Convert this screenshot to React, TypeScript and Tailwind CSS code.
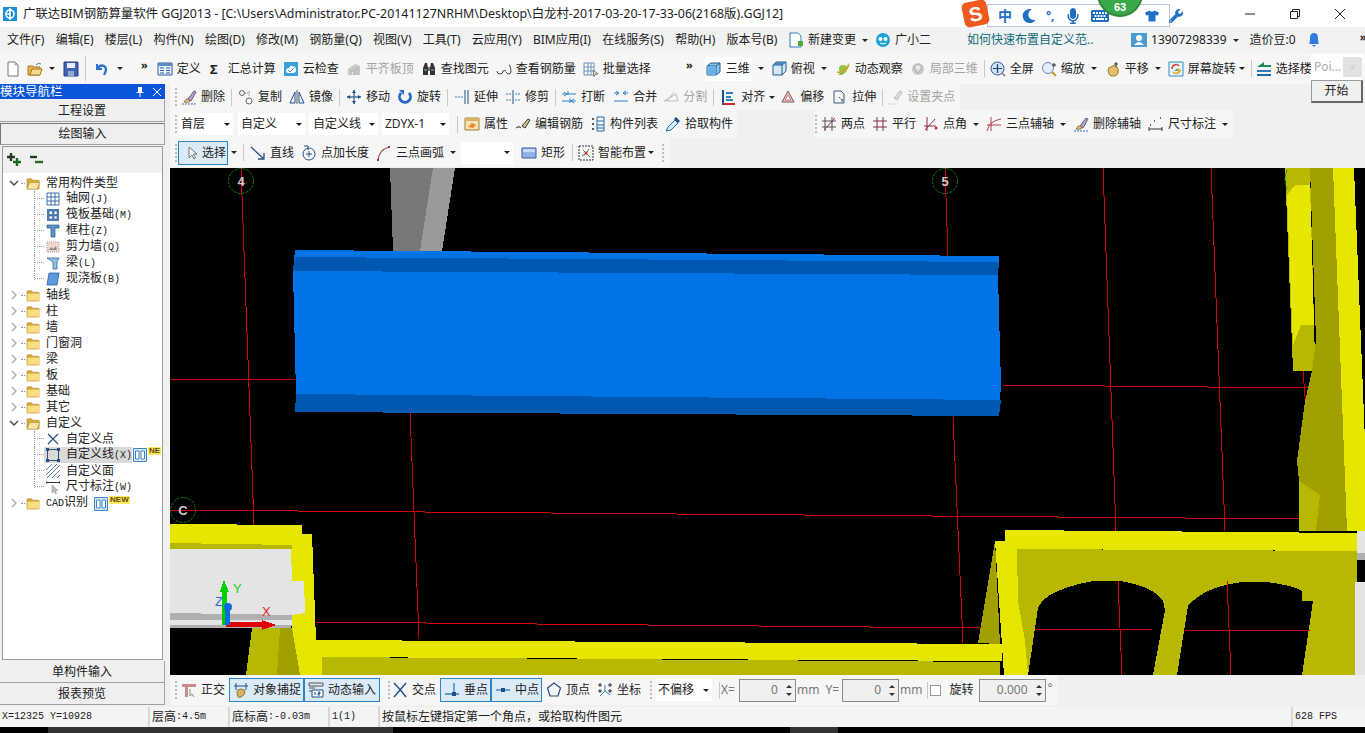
import type { ReactNode } from "react"
import { FaKeyboard, FaMicrophone, FaMoon, FaTshirt, FaWrench } from "react-icons/fa"

// small 16px icon wrapper, everything in the toolbars goes through this
function Ic({ children, className = "" }: { children: ReactNode; className?: string }) {
  return (
    <svg viewBox="0 0 16 16" className={`w-4 h-4 shrink-0 ${className}`} fill="none">
      {children}
    </svg>
  )
}

const icons = {
  doc: <Ic><path d="M3 1h7l3 3v11H3z" fill="#fff" stroke="#777" /><path d="M10 1v3h3" stroke="#999" /></Ic>,
  open: <Ic><path d="M1 5h5l1 1h6v8H1z" fill="#e9b44c" stroke="#a87a20" /><path d="M3 14l2-6h10l-2 6z" fill="#f6d88b" stroke="#a87a20" /><path d="M9 4q2-3 5-1" stroke="#3a7bd5" /></Ic>,
  save: <Ic><path d="M1 1h14v14H1z" fill="#3f63b5" stroke="#23408a" /><path d="M4 2h8v5H4z" fill="#e8eefc" /><path d="M5 10h6v5H5z" fill="#9aa7c7" /></Ic>,
  undo: <Ic><path d="M4 3v5h5" stroke="#2f6fd0" strokeWidth="2" /><path d="M4 8q3-5 7-3t0 9" stroke="#2f6fd0" strokeWidth="2.4" /></Ic>,
  define: <Ic><path d="M1 2h14v12H1z" fill="#eaf2fb" stroke="#2d5f9a" /><path d="M1 2h14v3H1z" fill="#5a8cc7" /><path d="M3 7h4M3 9.500h4M3 12h4M9 7h4M9 9.500h4M9 12h4" stroke="#2d5f9a" /></Ic>,
  cloud: <Ic><path d="M1 1h14v14H1z" fill="#3aa0dc" /><path d="M3 10q0-3 3-3 1-3 4-2t3 4q0 3-3 3H5q-2 0-2-2z" fill="#fff" /><path d="M5 9l2 2 4-4" stroke="#3aa0dc" /></Ic>,
  flat: <Ic><path d="M2 14V8l7-5 5 2v9z" fill="#c9c9c9" /><path d="M5 14v-4h3v4M10 14V7h2v7" fill="#e5e5e5" stroke="#aaa" /></Ic>,
  bino: <Ic><path d="M2 7l2-5h2l1 5v7H2zM9 7l1-5h2l2 5v7H9z" fill="#333" /><path d="M7 6h2v4H7z" fill="#777" /><path d="M3 9h3M10 9h3" stroke="#8fb3e0" /></Ic>,
  glasses: <Ic><path d="M1 10q0 3 3 3t3-3M10 11q1 2 3 2t2-3q-1-7-2-6" stroke="#444" /><path d="M7 10q1-1 3 0" stroke="#444" /></Ic>,
  batch: <Ic><path d="M1 2h10v12H1z" fill="#fff" stroke="#6f8fb5" /><path d="M1 6h10M1 10h10M5 2v12M8 2v12" stroke="#6f8fb5" /><path d="M10 9l5 4-3 .5-1 2z" fill="#ddd" stroke="#777" /></Ic>,
  cube: <Ic><path d="M1 5l4-3h9v9l-4 3H1z" fill="#8ec5ea" stroke="#1e5c8a" /><path d="M1 5h9v9M10 5l4-3" stroke="#1e5c8a" /><path d="M1 5h9v9H1z" fill="#6cafe0" /></Ic>,
  topview: <Ic><path d="M2 4l3-3h10v9l-4 4H2z" fill="#d5e8f6" stroke="#1e5c8a" /><path d="M2 4h9v10M11 4l4-3" stroke="#1e5c8a" /><path d="M5 1h10l-4 3H2z" fill="#4d88b8" /></Ic>,
  orbit: <Ic><path d="M3 13q6-1 9-8l2-3-1 5q-3 7-8 7z" fill="#6cad2e" /><circle cx="8" cy="8" r="4" fill="#8fc640" /><path d="M2 11q6 2 12-7" stroke="#d9a021" strokeWidth="1.500" /></Ic>,
  local3d: <Ic><circle cx="8" cy="8" r="6" fill="#c9c9c9" /><path d="M4 6l4-3 4 3-4 6z" fill="#e8e8e8" stroke="#aaa" /></Ic>,
  fullscreen: <Ic><circle cx="7.500" cy="7.500" r="6.500" fill="#cfe1f5" stroke="#3b5f92" /><path d="M7.500 3v9M3 7.500h9" stroke="#203f70" strokeWidth="1.200" /><path d="M12 12l3 3" stroke="#777" strokeWidth="1.500" /></Ic>,
  zoom: <Ic><circle cx="7" cy="7" r="5.500" fill="#e4edf8" stroke="#6f87a8" /><path d="M11 11l4 4" stroke="#c59a2a" strokeWidth="2" /><path d="M13 2v4M11 4h4" stroke="#333" /></Ic>,
  pan: <Ic><path d="M3 9q0-3 3-3l1-1q3-1 5 1t1 6q-1 3-4 3H6q-3-2-3-6z" fill="#e7bf6a" stroke="#9b7a2c" /><path d="M11 1v5M9 3h4" stroke="#333" /></Ic>,
  rotate: <Ic><path d="M1 1h14v14H1z" fill="#eaf2fb" stroke="#2c8fc6" /><path d="M4 8a4 4 0 0 1 7-3" stroke="#d9442c" strokeWidth="1.500" /><path d="M12 8a4 4 0 0 1-7 3" stroke="#e0a526" strokeWidth="1.500" /><path d="M6 10l4-3 1 3z" fill="#6cad2e" /></Ic>,
  floors: <Ic><path d="M1 6l7-5v3h7v2H1z" fill="#1f8a5a" /><path d="M1 9h14v2H1z" fill="#2d7fc4" /><path d="M1 13h14v2H1z" fill="#1f6aa8" /></Ic>,
  brush: <Ic><path d="M7 10l6-8 2 1-5 9z" fill="#b9a2c9" stroke="#6f5a80" /><path d="M3 13q2-4 4-3l2 2q-2 2-6 1z" fill="#e7c982" stroke="#8d7540" /><path d="M1 15h14" stroke="#3a6fc0" strokeDasharray="2 1" /></Ic>,
  copy: <Ic><circle cx="4" cy="4" r="2.500" stroke="#666" /><circle cx="11" cy="12" r="3" stroke="#666" /><path d="M7 4h5M11 2v5" stroke="#888" strokeDasharray="1 1" /></Ic>,
  mirror: <Ic><path d="M8 1v14" stroke="#555" /><path d="M6 3v11H1zM10 3v11h5z" stroke="#1f4f8a" /></Ic>,
  move: <Ic><path d="M8 1v14M1 8h14" stroke="#4a6f96" strokeWidth="1.400" /><path d="M8 1l-2 3h4zM8 15l-2-3h4zM1 8l3-2v4zM15 8l-3-2v4z" fill="#1f4f8a" /></Ic>,
  turn: <Ic><path d="M4 4a5.500 5.500 0 1 0 8 0" stroke="#2a66c8" strokeWidth="2.800" /><path d="M2 1h5v5z" fill="#2a66c8" /></Ic>,
  extend: <Ic><path d="M1 8h8" stroke="#2d7fc4" strokeDasharray="2 1" /><path d="M11 1v14M14 1v14" stroke="#1f4f8a" /></Ic>,
  trim: <Ic><path d="M1 5h5M1 11h5M10 5h5M10 11h5" stroke="#2d7fc4" strokeDasharray="2 1" /><path d="M8 1v14" stroke="#1f4f8a" /></Ic>,
  breakIc: <Ic><path d="M1 5h14M1 12h14" stroke="#2d7fc4" /><path d="M3 3l3 2-3 2M13 10l-3 2 3 2M7 2v4M9 9v5" stroke="#2d7fc4" /></Ic>,
  merge: <Ic><path d="M1 4h5M10 4h5M1 12h14" stroke="#2d7fc4" /><path d="M3 2l3 2-3 2M13 2l-3 2 3 2" stroke="#2d7fc4" /></Ic>,
  split: <Ic><path d="M1 12h14L13 5zM4 12l7-9" stroke="#bbb" /></Ic>,
  align: <Ic><path d="M2 1v14h12" stroke="#1f4f8a" strokeWidth="2" /><path d="M2 15h12" stroke="#c62d2d" strokeWidth="2" /><path d="M5 4h7M5 8h5M5 11h7" stroke="#2d7fc4" strokeWidth="2" /></Ic>,
  offset: <Ic><path d="M8 2l6 11H2z" fill="#f4c2c2" stroke="#7a5a5a" /><path d="M8 6l3 5H5z" fill="#fff" stroke="#c97b7b" /></Ic>,
  stretch: <Ic><path d="M2 2h7l3 3v9H2z" stroke="#3a5a80" /><path d="M7 8l4 4M9 12h2v-2" stroke="#3a5a80" strokeDasharray="2 1" /></Ic>,
  grip: <Ic><path d="M7 9l6-7 2 1-5 8z" fill="#ddd" stroke="#bbb" /><path d="M1 15h10" stroke="#ccc" strokeDasharray="2 1" /></Ic>,
  props: <Ic><path d="M1 2h14v12H1z" fill="#f6e3b4" stroke="#9c7c35" /><path d="M1 2h14v3H1z" fill="#d8b25e" /><path d="M4 11l4-4 4 2-3 3z" fill="#e58a2b" /></Ic>,
  editbar: <Ic><path d="M1 12q3-3 5 0M7 10l6-7 2 1-5 8z" stroke="#333" fill="#d8c089" /></Ic>,
  list: <Ic><path d="M7 1h7v14H7z" stroke="#1f6aa8" /><path d="M7 5h7M7 9h7M7 12h7" stroke="#1f6aa8" /><path d="M2 2h2v2H2zM2 7h2v2H2zM2 12h2v2H2z" fill="#555" /></Ic>,
  pick: <Ic><path d="M1 15l2-4 7-7 3 3-7 7z" fill="#d5ecf7" stroke="#1f6aa8" /><path d="M9 3l2-2 4 4-2 2z" fill="#1f4f8a" /></Ic>,
  twoPt: <Ic><path d="M4 1v14M11 1v14M1 11h14M1 5l14 0" stroke="#555" /><path d="M3 14L14 2" stroke="#8a2d2d" /></Ic>,
  parallel: <Ic><path d="M5 1v14M11 1v14M1 5h14M1 11h14" stroke="#8a2d4a" /></Ic>,
  angle: <Ic><path d="M4 1v14M1 10h12M2 14L12 3" stroke="#8a2d4a" /><circle cx="13" cy="12" r="1.500" fill="#c62d2d" /></Ic>,
  threePt: <Ic><path d="M1 15Q3 5 15 3M5 1v14M1 9h14" stroke="#b0404a" /></Ic>,
  dim: <Ic><path d="M1 11v4M14 11v4M1 13h13" stroke="#333" /><path d="M2 9h1M6 5h1M12 2h1" stroke="#4a7a3a" strokeWidth="2" /></Ic>,
  cursor: <Ic><path d="M5 2v11l3-3 2 4 1.500-1-2-4h3.500z" fill="#f4f8fc" stroke="#777" /></Ic>,
  line: <Ic><path d="M1 2l13 12M14 8v6H8" stroke="#2a4f80" strokeWidth="1.300" /></Ic>,
  ptLen: <Ic><circle cx="8" cy="9" r="6" stroke="#2a4f80" /><path d="M8 6v6M5 9h6" stroke="#2a4f80" /><path d="M3 1h4v4" stroke="#2a4f80" /></Ic>,
  arc: <Ic><path d="M2 15Q3 5 13 2" stroke="#8a5a4a" strokeWidth="1.300" /><path d="M1 14h2v2H1zM12 1h2v2h-2z" fill="#c62d2d" /></Ic>,
  rect: <Ic><path d="M1 3h14v10H1z" fill="#8fb3ea" stroke="#3a5fa0" /><path d="M2 4h12v3H2z" fill="#c9dcf7" /></Ic>,
  smart: <Ic><path d="M1 1h14v14H1z" stroke="#333" strokeDasharray="2 1" /><path d="M5 5l2 2M11 4l-2 3M4 11l3-2M12 12L9 9" stroke="#4a7a3a" /><circle cx="8" cy="8" r="1.500" fill="#c62d2d" /></Ic>,
  ortho: <Ic><path d="M1 2h14v3H1zM4 5h3v10H4z" fill="#c98b8b" /><path d="M9 7v7l2-2 2 3" stroke="#888" /></Ic>,
  snap: <Ic><path d="M3 1v7M13 1v7M1 4h14" stroke="#1f4f8a" /><path d="M4 10q0-3 4-3t4 3-4 5-4-5z" fill="#d8b25e" stroke="#8d7540" /></Ic>,
  dyn: <Ic><path d="M1 1h14v3H1z" stroke="#555" /><path d="M1 6h6M1 9h6" stroke="#555" /><path d="M4 8h11v7H4z" fill="#fff" stroke="#1f4f8a" /><path d="M7 10v3M10 10h2v1.500h-2V13h2" stroke="#1f4f8a" /></Ic>,
  cross: <Ic><path d="M2 1q7 7 12 14M14 1Q8 8 2 15" stroke="#1f4f8a" strokeWidth="1.400" /></Ic>,
  perp: <Ic><path d="M10 1v11M1 12h14" stroke="#2d7fc4" strokeWidth="1.300" /><path d="M8 10h4v4H8z" fill="#1f4f8a" /></Ic>,
  mid: <Ic><path d="M1 8h14" stroke="#2d7fc4" strokeWidth="1.300" /><path d="M6 6h4v4H6z" fill="#1f4f8a" /></Ic>,
  vertex: <Ic><path d="M8 1l6.500 5-2.500 8H4L1.500 6z" stroke="#2a4f80" strokeWidth="1.200" /></Ic>,
  coord: <Ic><path d="M8 3v6l-5 5M8 9l5 4" stroke="#2d7fc4" /><path d="M2 2h2v2H2zM12 2h2v2h-2zM2 8h2v2H2zM12 8h2v2h-2z" stroke="#333" /></Ic>,
  fileNew: <Ic><path d="M2 1h8l3 3v11H2z" fill="#fff" stroke="#2d7fc4" /><path d="M10 9h5v5h-5z" fill="#4fae3a" /></Ic>,
  xiaoer: <Ic><circle cx="8" cy="8" r="7" fill="#1ba3d6" /><circle cx="5.500" cy="7" r="2" fill="#fff" /><circle cx="10.500" cy="7" r="2" fill="#fff" /><path d="M5 11q3 2 6 0" stroke="#fff" /></Ic>,
  user: <Ic><path d="M0 1h16v14H0z" fill="#4a9ad4" /><circle cx="8" cy="6" r="3" fill="#fff" /><path d="M3 13q5-6 10 0z" fill="#fff" /></Ic>,
  bell: <Ic><path d="M3 12q1-1 1-6t4-5 4 5 1 6z" fill="#2f7de0" /><path d="M6 13h4l-2 2z" fill="#2f7de0" /></Ic>,
}

function Caret({ className = "" }: { className?: string }) {
  return <span className={`w-0 h-0 shrink-0 border-x-[3px] border-t-[3px] border-x-transparent border-t-[#222] ${className}`} />
}

function Sep({ className = "" }: { className?: string }) {
  return <span className={`w-px h-[17px] bg-[#c8c8c8] shrink-0 ${className}`} />
}

function Grip({ className = "" }: { className?: string }) {
  return <span className={`h-[18px] border-l-2 border-dotted border-[#bdbdbd] shrink-0 ${className}`} />
}

function Tool({ icon, label, off, className = "" }: { icon: ReactNode; label: string; off?: boolean; className?: string }) {
  return (
    <div className={`flex items-center gap-1 shrink-0 ${off ? "text-[#a3a3a3]" : ""} ${className}`}>
      {icon}
      <span>{label}</span>
    </div>
  )
}

function Chevrons({ className = "" }: { className?: string }) {
  return <span className={`text-[11px] font-bold leading-none shrink-0 ${className}`}>»</span>
}

function Drop({ label, className = "" }: { label: string; className?: string }) {
  return (
    <div className={`h-[22px] bg-white flex items-center justify-between pr-[3px] shrink-0 ${className}`}>
      <span>{label}</span>
      <Caret />
    </div>
  )
}

function Active({ children, className = "" }: { children: ReactNode; className?: string }) {
  return <div className={`h-[24px] flex items-center gap-1 border border-[#2a84c6] bg-[#dbeaf7] shrink-0 ${className}`}>{children}</div>
}

function Spin({ value, className = "" }: { value: string; className?: string }) {
  return (
    <div className={`h-[23px] border border-[#8a8a8a] bg-[#f0f0f0] text-[#777] flex items-center justify-end shrink-0 ${className}`}>
      <span className="mr-[8px]">{value}</span>
      <div className="flex flex-col gap-[5px] mr-[3px]">
        <span className="w-0 h-0 border-x-[3px] border-b-[3px] border-x-transparent border-b-[#333]" />
        <span className="w-0 h-0 border-x-[3px] border-t-[3px] border-x-transparent border-t-[#333]" />
      </div>
    </div>
  )
}

function Folder({ open }: { open?: boolean }) {
  return (
    <svg viewBox="0 0 16 14" className="w-[15px] h-[13px] shrink-0">
      <path d="M1 2h5l1 1.500h7V13H1z" fill="#d9a93a" stroke="#b08628" strokeWidth=".6" />
      {open ? <path d="M1 13l3-7h11l-3 7z" fill="#fbe6a8" stroke="#b08628" strokeWidth=".6" /> : <path d="M1.500 5h13v7.500h-13z" fill="#fbdc85" />}
    </svg>
  )
}

function TreeGroup({ label, open, mono }: { label: string; open?: boolean; mono?: string }) {
  return (
    <div className="h-4 flex items-center shrink-0">
      <svg viewBox="0 0 10 10" className="w-[10px] h-[10px] ml-[6px] mr-[2px] shrink-0">
        {open ? <path d="M1 3l4 4 4-4" fill="none" stroke="#444" strokeWidth="1.400" /> : <path d="M3 1l4 4-4 4" fill="none" stroke="#aaa" strokeWidth="1.400" />}
      </svg>
      <span className="w-[4px] border-b border-dotted border-[#999] mr-[1px]" />
      <Folder open={open} />
      <span className="ml-[5px] whitespace-nowrap">
        {mono ? <span className="font-['Liberation_Mono',monospace] text-[10px]">{mono}</span> : null}
        {label}
      </span>
    </div>
  )
}

function TreeLeaf({ icon, label, suffix, last, selected, children }: { icon: ReactNode; label: string; suffix?: string; last?: boolean; selected?: boolean; children?: ReactNode }) {
  return (
    <div className="h-4 flex items-start pl-[31px] shrink-0">
      <div className={`w-[10px] border-l border-dotted border-[#999] shrink-0 ${last ? "h-[9px]" : "h-4"}`}>
        <div className="h-[8px] border-b border-dotted border-[#999]" />
      </div>
      <div className={`flex items-center h-4 pl-[2px] ${selected ? "bg-[#d9d9d9]" : ""}`}>
        <span className="w-[14px] h-4 flex items-center shrink-0 mr-[6px]">{icon}</span>
        <span className="whitespace-nowrap">
          {label}
          {suffix ? <span className="font-['Liberation_Mono',monospace] text-[10px]">{suffix}</span> : null}
        </span>
      </div>
      {children}
    </div>
  )
}

function BookNew({ text = "NEW", className = "" }: { text?: string; className?: string }) {
  return (
    <div className={`flex items-start shrink-0 ${className}`}>
      <svg viewBox="0 0 14 14" className="w-[14px] h-[14px] mt-[1px] shrink-0">
        <path d="M.5.500h13v13H.5z" fill="#dcebf8" stroke="#3a83c4" />
        <path d="M2.500 3h3.500v8H2.500zM8 3h3.500v8H8z" fill="#fff" stroke="#3a83c4" />
      </svg>
      <span className="ml-[1px] bg-[#ffe95c] text-[#5b4a00] text-[8px] leading-[8px] font-bold px-[1px] font-['Liberation_Sans',sans-serif]">{text}</span>
    </div>
  )
}

function SideButton({ label, sunken }: { label: string; sunken?: boolean }) {
  return (
    <div className={`h-[22px] flex items-center justify-center bg-[#efefef] shrink-0 border-b border-r border-[#a0a0a0] ${sunken ? "border-t border-l border-t-[#777] border-l-[#777]" : ""}`}>
      {label}
    </div>
  )
}

function LeftPanel() {
  return (
    <aside className="w-[165px] flex flex-col shrink-0">
      <div className="h-[15px] bg-[#0a55d9] text-white flex items-center shrink-0">
        <span className="text-[12.5px] leading-[15px]">模块导航栏</span>
        <svg viewBox="0 0 12 12" className="w-3 h-3 ml-[71px]"><path d="M4 1h4v5h1.500v1h-3v4h-1V7h-3V6H4z" fill="#fff" /></svg>
        <svg viewBox="0 0 12 12" className="w-3 h-3 ml-[5px]"><path d="M2 2l8 8M10 2l-8 8" stroke="#fff" /></svg>
      </div>
      <div className="h-px shrink-0" />
      <SideButton label="工程设置" />
      <div className="h-px shrink-0" />
      <SideButton label="绘图输入" sunken />
      <div className="mx-[2px] flex-1 min-h-0 mt-[1px] border border-[#9a9a9a] bg-[#f0f0f0] flex flex-col overflow-hidden">
        <div className="h-[26px] flex items-center pl-[3px] shrink-0">
          <svg viewBox="0 0 40 16" className="w-10 h-4">
            <path d="M5 1v8M1 5h8" stroke="#1f3d1f" strokeWidth="2.400" />
            <path d="M11 6v8M7 10h8" stroke="#1f6a1f" strokeWidth="2.400" />
            <path d="M24 5h7" stroke="#1f3d1f" strokeWidth="2.400" />
            <path d="M29 10h8" stroke="#1f6a1f" strokeWidth="2.400" />
          </svg>
        </div>
        <div className="flex-1 bg-white flex flex-col pt-[2px] overflow-hidden leading-4">
          <TreeGroup label="常用构件类型" open />
          <TreeLeaf label="轴网" suffix="(J)" icon={<svg viewBox="0 0 14 14" className="w-[14px] h-[14px]"><path d="M1 1h12v12H1zM1 5h12M1 9h12M5 1v12M9 1v12" fill="none" stroke="#3b6fb0" /></svg>} />
          <TreeLeaf label="筏板基础" suffix="(M)" icon={<svg viewBox="0 0 14 14" className="w-[14px] h-[14px]"><path d="M1 1h12v12H1z" fill="#4d7fb8" /><path d="M3 3h3.500v3.500H3zM8 3h3v3.500H8zM3 8h3.500v3H3zM8 8h3v3H8z" fill="#fff" stroke="#22487a" strokeWidth=".5" /></svg>} />
          <TreeLeaf label="框柱" suffix="(Z)" icon={<svg viewBox="0 0 14 14" className="w-[14px] h-[14px]"><path d="M1 1h12v3H9v9H5V4H1z" fill="#5b90c9" stroke="#2c5a8a" strokeWidth=".7" /></svg>} />
          <TreeLeaf label="剪力墙" suffix="(Q)" icon={<svg viewBox="0 0 14 14" className="w-[14px] h-[14px]"><path d="M1 2h12v10H1z" fill="#f0d8cf" stroke="#b89" strokeDasharray="1 1" /><path d="M3 10l2-3 2 2 3-3 1 4z" fill="#888" /></svg>} />
          <TreeLeaf label="梁" suffix="(L)" icon={<svg viewBox="0 0 14 14" className="w-[14px] h-[14px]"><path d="M1 2h12l-2 4v7H7V6z" fill="#8fc0e6" stroke="#2c5a8a" strokeWidth=".7" /></svg>} />
          <TreeLeaf last label="现浇板" suffix="(B)" icon={<svg viewBox="0 0 14 14" className="w-[14px] h-[14px]"><path d="M3 1h10l-2 12H1z" fill="#5d9be0" stroke="#1f4f8a" strokeWidth=".7" /></svg>} />
          <TreeGroup label="轴线" />
          <TreeGroup label="柱" />
          <TreeGroup label="墙" />
          <TreeGroup label="门窗洞" />
          <TreeGroup label="梁" />
          <TreeGroup label="板" />
          <TreeGroup label="基础" />
          <TreeGroup label="其它" />
          <TreeGroup label="自定义" open />
          <TreeLeaf label="自定义点" icon={<svg viewBox="0 0 14 14" className="w-[14px] h-[14px]"><path d="M2 2l10 10M12 2L2 12" stroke="#2a4f80" strokeWidth="1.200" /></svg>} />
          <TreeLeaf selected label="自定义线" suffix="(X)" icon={<svg viewBox="0 0 14 14" className="w-[14px] h-[14px]"><path d="M1.500 1.500h11v11h-11z" fill="none" stroke="#2a4f80" /><path d="M0 0h3v3H0zM11 0h3v3h-3zM0 11h3v3H0zM11 11h3v3h-3z" fill="#2a4f80" /></svg>}>
            <BookNew text="NE" className="ml-px" />
          </TreeLeaf>
          <TreeLeaf label="自定义面" icon={<svg viewBox="0 0 14 14" className="w-[14px] h-[14px]"><path d="M0 6l6-6M0 11L11 0M1 14L14 1M6 14l8-8M11 14l3-3" stroke="#5a7fa8" /></svg>} />
          <TreeLeaf last label="尺寸标注" suffix="(W)" icon={<svg viewBox="0 0 14 14" className="w-[14px] h-[14px]"><path d="M0 1v3M14 1v3M0 2.500h14" stroke="#333" /><path d="M6 5v8l2-2 1.500 3 1-.5L9 10.500h3z" fill="#bbb" stroke="#888" strokeWidth=".5" /></svg>} />
          <div className="h-4 flex items-center shrink-0">
            <TreeGroup label="识别" mono="CAD" />
            <BookNew className="ml-[6px]" />
          </div>
        </div>
      </div>
      <div className="h-px shrink-0" />
      <SideButton label="单构件输入" />
      <SideButton label="报表预览" />
      <div className="h-[2px] shrink-0" />
    </aside>
  )
}

function Canvas() {
  return (
    <div className="h-[507px] mt-px bg-black shrink-0 overflow-hidden">
      <svg viewBox="170 168 1195 507" className="block w-[1195px] h-[507px]" shapeRendering="crispEdges">
        {/* grid lines */}
        <g stroke="#d40000" strokeWidth="1" fill="none">
          <path d="M241 168L254 525" />
          <path d="M945 168L948 256" />
          <path d="M410 412L419 638" />
          <path d="M953 417L963 643" />
          <path d="M1103 168L1116 531" />
          <path d="M1211 168L1225 531" />
          <path d="M170 379H295" />
          <path d="M1001 385L1310 388" />
          <path d="M170 510L1310 519" />
          <path d="M316 622L980 628" />
          <path d="M1303 371L1306 408" />
        </g>

        {/* column behind the beam */}
        <polygon points="390,168 433,168 420,251 393,251" fill="#787878" />
        <polygon points="433,168 455,168 442,251 420,251" fill="#9a9a9a" />

        {/* selected beam */}
        <polygon points="295,250 999,256 998,275 1001,385 1000,400 296,394 293,271" fill="#0073e5" />
        <polygon points="295,257 999,262 998,275 293,271" fill="#0058b0" />
        <polygon points="296,394 1001,400 999,416 295,412" fill="#0058b0" />

        {/* bottom-left wall */}
        <polygon points="246,675 252,628 292,628 300,675" fill="#b8b800" />
        <polygon points="277,675 280,628 292,628 300,675" fill="#a0a000" />
        <polygon points="170,524 302,525 302,534 312,534 316,640 1002,644 1002,661 322,657 322,675 300,675 292,628 291,549 170,549" fill="#e6e600" />
        <polygon points="170,543 292,545 292,549 170,549" fill="#b8b800" />
        <polygon points="170,549 291,549 292,581 304,581 305,613 292,615 170,613" fill="#e4e4e4" />
        <polygon points="170,613 292,615 292,620 170,620" fill="#b0b0b0" />
        <polygon points="170,620 292,620 292,625 170,625" fill="#e4e4e4" />
        <polygon points="170,625 292,625 291,628 170,628" fill="#b0b0b0" />
        <polygon points="322,657 1000,662 1000,675 322,675" fill="#b8b800" />

        {/* right wall with the arches */}
        <polygon points="978,643 995,541 1000,644" fill="#a0a000" />
        <polygon points="1017,549 1357,551 1355,675 1017,675" fill="#b8b800" />
        <path d="M1028 675L1038 608Q1045 590 1093 581H1120Q1155 587 1163 601L1165 610L1153 675Z" fill="#000" />
        <path d="M1177 675L1188 606Q1205 586 1243 582H1267Q1295 586 1302 591V601H1313L1302 675Z" fill="#000" />
        <g stroke="#d40000" strokeWidth="1" fill="none">
          <path d="M1118 581L1122 675" />
          <path d="M1227 581L1231 675" />
          <path d="M1035 629L1152 630" />
          <path d="M1185 630L1310 631" />
        </g>
        <polygon points="1005,530 1357,533 1358,551 1017,549 1018,601 1025,641 1028,675 1004,675 995,541 1005,541" fill="#e6e600" />

        {/* top right column */}
        <polygon points="1285,168 1310,168 1315,361 1313,371 1293,371" fill="#b8b800" />
        <polygon points="1287,195 1295,185 1301,325 1293,345" fill="#e6e600" />
        <polygon points="1295,185 1310,185 1314,325 1301,325" fill="#e6e600" />
        <polygon points="1310,168 1333,168 1347,531 1299,531 1299,481 1297,461 1305,401 1312,371 1316,340" fill="#a0a000" />
        <polygon points="1299,481 1320,495 1316,531 1299,531" fill="#b8b800" />
        <polygon points="1333,168 1354,168 1365,441 1365,531 1347,531" fill="#e6e600" />

        {/* piece on the right edge */}
        <rect x="1357" y="531" width="8" height="22" fill="#e4e4e4" />
        <rect x="1357" y="553" width="8" height="7" fill="#b0b0b0" />
        <rect x="1355" y="582" width="10" height="93" fill="#e4e4e4" />

        {/* axis bubbles */}
        <g fill="none" stroke="#127812" strokeDasharray="3 1" shapeRendering="auto">
          <circle cx="241" cy="181" r="12.500" />
          <circle cx="945" cy="181" r="12.500" />
          <circle cx="183" cy="510" r="12.500" />
          <path d="M1287 170Q1283 180 1287 190" />
        </g>
        <g fill="#ccc" fontSize="13" fontWeight="700" textAnchor="middle" fontFamily="Liberation Sans, sans-serif" shapeRendering="auto">
          <text x="241" y="186">4</text>
          <text x="945" y="186">5</text>
          <text x="183" y="515">C</text>
        </g>

        {/* ucs axes */}
        <rect x="222" y="590" width="5" height="35" fill="#00d000" />
        <polygon points="224,580 220,592 229,592" fill="#00d000" />
        <rect x="226" y="622" width="38" height="5" fill="#e00000" />
        <polygon points="262,620 276,625 262,630" fill="#e00000" />
        <rect x="225" y="606" width="5" height="19" fill="#0a6ae0" />
        <circle cx="228" cy="607" r="4" fill="#0a6ae0" shapeRendering="auto" />
        <g fontSize="13" fontFamily="Liberation Sans, sans-serif" shapeRendering="auto">
          <text x="233" y="593" fill="#22cc22">Y</text>
          <text x="215" y="606" fill="#2a6ae0">Z</text>
          <text x="262" y="616" fill="#dd2222">X</text>
        </g>
      </svg>
    </div>
  )
}

function TitleBar() {
  return (
    <div className="h-[27px] bg-white flex items-center shrink-0">
      <svg viewBox="0 0 16 16" className="w-4 h-4 ml-[2px] shrink-0">
        <path d="M1 1h14v14H1z" fill="#1d8fd8" />
        <circle cx="8" cy="8" r="4" fill="none" stroke="#fff" strokeWidth="1.600" />
        <path d="M8 2v12M3 8h5" stroke="#fff" strokeWidth="1.600" />
      </svg>
      <span className="ml-[5px] text-[12.4px] whitespace-nowrap">广联达BIM钢筋算量软件 GGJ2013 - [C:\Users\Administrator.PC-20141127NRHM\Desktop\白龙村-2017-03-20-17-33-06(2168版).GGJ12]</span>
      <svg viewBox="0 0 10 10" className="w-[10px] h-[10px] ml-auto shrink-0"><path d="M0 5h10" stroke="#222" /></svg>
      <svg viewBox="0 0 10 10" className="w-[10px] h-[10px] ml-[35px] shrink-0"><path d="M.5 2.500h7v7h-7zM2.500 2.500v-2h7v7h-2" fill="none" stroke="#222" /></svg>
      <svg viewBox="0 0 10 10" className="w-[10px] h-[10px] ml-[35px] mr-5 shrink-0"><path d="M0 0l10 10M10 0L0 10" stroke="#222" /></svg>
    </div>
  )
}

function MenuBar() {
  const items = ["文件(F)", "编辑(E)", "楼层(L)", "构件(N)", "绘图(D)", "修改(M)", "钢筋量(Q)", "视图(V)", "工具(T)", "云应用(Y)", "BIM应用(I)", "在线服务(S)", "帮助(H)", "版本号(B)"]
  return (
    <div className="h-[26px] bg-[#f2f2f2] flex items-center pl-[7px] shrink-0 whitespace-nowrap overflow-hidden">
      <div className="flex gap-[11.2px] w-[781px] shrink-0">
        {items.map((m) => (
          <span key={m}>{m}</span>
        ))}
      </div>
      <Tool icon={icons.fileNew} label="新建变更" />
      <Caret className="ml-[6px]" />
      <Tool icon={icons.xiaoer} label="广小二" className="ml-[7px]" />
      <span className="ml-[36px] text-[#0f6a7a] w-[127px] shrink-0">如何快速布置自定义范..</span>
      <Tool icon={icons.user} label="13907298339" className="ml-[37px]" />
      <Caret className="ml-[6px]" />
      <span className="ml-[11px] shrink-0">造价豆:0</span>
      <span className="ml-[10px] shrink-0">{icons.bell}</span>
      <Chevrons className="ml-[38px] -mt-2" />
    </div>
  )
}

function MainToolbar() {
  return (
    <div className="h-[31px] bg-[#f6f6f6] flex items-center pl-[5px] shrink-0 whitespace-nowrap">
      {icons.doc}
      <span className="ml-[6px]">{icons.open}</span>
      <Caret className="ml-[6px]" />
      <span className="ml-[8px]">{icons.save}</span>
      <Sep className="ml-[6px] h-[25px]" />
      <span className="ml-[7px]">{icons.undo}</span>
      <Caret className="ml-[8px]" />
      <Chevrons className="ml-[18px] -mt-2" />
      <div className="flex items-center gap-[7px] ml-[9px]">
        <Tool icon={icons.define} label="定义" />
        <Tool icon={<Ic><text x="2" y="13" fontSize="13" fontWeight="700" fill="#222">Σ</text></Ic>} label="汇总计算" />
        <Tool icon={icons.cloud} label="云检查" />
        <Tool icon={icons.flat} label="平齐板顶" off />
        <Tool icon={icons.bino} label="查找图元" />
        <Tool icon={icons.glasses} label="查看钢筋量" />
        <Tool icon={icons.batch} label="批量选择" />
      </div>
      <Chevrons className="ml-[35px] -mt-2" />
      <div className="flex items-center ml-[12px] h-[24px] bg-white pl-px pr-[2px]">
        <Tool icon={icons.cube} label="三维" />
      </div>
      <Caret className="ml-[6px]" />
      <Tool icon={icons.topview} label="俯视" className="ml-[7px]" />
      <Caret className="ml-[6px]" />
      <div className="flex items-center gap-[7px] ml-[8px]">
        <Tool icon={icons.orbit} label="动态观察" />
        <Tool icon={icons.local3d} label="局部三维" off />
      </div>
      <Sep className="ml-[6px]" />
      <Tool icon={icons.fullscreen} label="全屏" className="ml-[5px]" />
      <Tool icon={icons.zoom} label="缩放" className="ml-[7px]" />
      <Caret className="ml-[6px]" />
      <Tool icon={icons.pan} label="平移" className="ml-[8px]" />
      <Caret className="ml-[6px]" />
      <Tool icon={icons.rotate} label="屏幕旋转" className="ml-[7px]" />
      <Caret className="ml-[3px]" />
      <Sep className="ml-[6px]" />
      <Tool icon={icons.floors} label="选择楼" className="ml-[4px]" />
    </div>
  )
}

function EditRow() {
  return (
    <div className="h-[26px] flex items-center shrink-0 whitespace-nowrap">
      <div className="h-full w-[790px] bg-[#f6f6f6] flex items-center pl-[5px] gap-[6px]">
        <Grip />
        <Tool icon={icons.brush} label="删除" className="-ml-[2px]" />
        <Sep />
        <Tool icon={icons.copy} label="复制" />
        <Tool icon={icons.mirror} label="镜像" className="ml-[1px]" />
        <Sep />
        <Tool icon={icons.move} label="移动" />
        <Tool icon={icons.turn} label="旋转" className="ml-[1px]" />
        <Sep />
        <Tool icon={icons.extend} label="延伸" />
        <Tool icon={icons.trim} label="修剪" className="ml-[1px]" />
        <Sep />
        <Tool icon={icons.breakIc} label="打断" className="-ml-[1px]" />
        <Tool icon={icons.merge} label="合并" className="ml-[2px]" />
        <Tool icon={icons.split} label="分割" off />
        <Sep />
        <Tool icon={icons.align} label="对齐" className="ml-[1px]" />
        <Caret className="-ml-[2px]" />
        <Tool icon={icons.offset} label="偏移" className="-ml-[1px]" />
        <Tool icon={icons.stretch} label="拉伸" className="ml-[2px]" />
        <Sep />
        <Tool icon={icons.grip} label="设置夹点" off className="-ml-[2px]" />
      </div>
    </div>
  )
}

function PropertyRow() {
  return (
    <div className="h-[28px] flex items-center shrink-0 whitespace-nowrap">
      <div className="h-full w-[567px] bg-[#f6f6f6] flex items-center pl-[5px]">
        <Grip />
        <Drop label="首层" className="w-[54px] ml-[2px] pl-[2px]" />
        <Drop label="自定义" className="w-[67px] ml-[5px] pl-[3px]" />
        <Drop label="自定义线" className="w-[69px] ml-[4px] pl-[4px]" />
        <Drop label="ZDYX-1" className="w-[67px] ml-[4px] pl-[3px]" />
        <Sep className="ml-[8px]" />
        <Tool icon={icons.props} label="属性" className="ml-[6px]" />
        <Tool icon={icons.editbar} label="编辑钢筋" className="ml-[7px]" />
        <Tool icon={icons.list} label="构件列表" className="ml-[7px]" />
        <Tool icon={icons.pick} label="拾取构件" className="ml-[7px]" />
      </div>
      <div className="h-full w-[419px] ml-[77px] bg-[#f6f6f6] flex items-center pl-[1px]">
        <Grip />
        <Tool icon={icons.twoPt} label="两点" className="ml-[4px]" />
        <Tool icon={icons.parallel} label="平行" className="ml-[7px]" />
        <Tool icon={icons.angle} label="点角" className="ml-[7px]" />
        <Caret className="ml-[6px]" />
        <Tool icon={icons.threePt} label="三点辅轴" className="ml-[7px]" />
        <Caret className="ml-[6px]" />
        <Tool icon={icons.brush} label="删除辅轴" className="ml-[7px]" />
        <Tool icon={icons.dim} label="尺寸标注" className="ml-[7px]" />
        <Caret className="ml-[6px]" />
      </div>
    </div>
  )
}

function DrawRow() {
  return (
    <div className="h-[29px] flex items-center shrink-0 whitespace-nowrap">
      <div className="h-full w-[500px] bg-[#f6f6f6] flex items-center pl-[5px]">
        <Grip />
        <Active className="ml-[1px] w-[50px] pl-[5px]">
          {icons.cursor}
          <span className="-ml-[2px]">选择</span>
        </Active>
        <Caret className="ml-[3px]" />
        <Sep className="ml-[6px]" />
        <Tool icon={icons.line} label="直线" className="ml-[6px]" />
        <Tool icon={icons.ptLen} label="点加长度" className="ml-[7px]" />
        <Tool icon={icons.arc} label="三点画弧" className="ml-[7px]" />
        <Caret className="ml-[6px]" />
        <Drop label="" className="w-[52px] ml-[5px]" />
        <Tool icon={icons.rect} label="矩形" className="ml-[8px]" />
        <Sep className="ml-[7px]" />
        <Tool icon={icons.smart} label="智能布置" className="ml-[5px]" />
        <Caret className="ml-[2px]" />
        <Grip className="ml-[8px]" />
      </div>
    </div>
  )
}

function SnapRow() {
  return (
    <div className="h-[30px] flex items-center shrink-0 whitespace-nowrap">
      <div className="h-full w-[888px] bg-[#f6f6f6] flex items-center pl-[5px]">
        <Grip />
        <Tool icon={icons.ortho} label="正交" className="ml-[4px]" />
        <Active className="ml-[4px] w-[75px] pl-[3px]">{icons.snap}<span>对象捕捉</span></Active>
        <Active className="w-[76px] pl-[3px]">{icons.dyn}<span>动态输入</span></Active>
        <Grip className="ml-[8px]" />
        <Tool icon={icons.cross} label="交点" className="ml-[2px]" />
        <Active className="ml-[4px] w-[51px] pl-[3px]">{icons.perp}<span>垂点</span></Active>
        <Active className="w-[51px] pl-[3px]">{icons.mid}<span>中点</span></Active>
        <Tool icon={icons.vertex} label="顶点" className="ml-[4px]" />
        <Tool icon={icons.coord} label="坐标" className="ml-[7px]" />
        <Grip className="ml-[9px]" />
        <Drop label="不偏移" className="w-[56px] ml-[4px] pl-[2px]" />
        <Sep className="ml-[7px]" />
        <span className="ml-[1px] text-[#777]">X=</span>
        <Spin value="0" className="w-[57px] ml-[4px]" />
        <span className="ml-[1px] text-[#777]">mm</span>
        <span className="ml-[6px] text-[#777]">Y=</span>
        <Spin value="0" className="w-[57px] ml-[3px]" />
        <span className="ml-[1px] text-[#777]">mm</span>
        <Sep className="ml-[4px]" />
        <span className="w-[11px] h-[11px] border border-[#999] bg-white ml-[2px] shrink-0" />
        <span className="ml-[9px]">旋转</span>
        <Spin value="0.000" className="w-[67px] ml-[5px]" />
        <span className="ml-[2px] -mt-1 text-[#777]">°</span>
      </div>
    </div>
  )
}

function StatusCell({ children, className = "" }: { children: ReactNode; className?: string }) {
  return <div className={`h-full bg-[#f4f4f4] flex items-center pl-[2px] shrink-0 overflow-hidden ${className}`}>{children}</div>
}

function StatusBar() {
  return (
    <div className="h-[20px] flex items-stretch gap-[2px] bg-[#d8d8d8] shrink-0 whitespace-nowrap">
      <StatusCell className="w-[148px] font-['Liberation_Mono',monospace] text-[10px]">X=12325 Y=10928</StatusCell>
      <StatusCell className="w-[78px]">层高<span className="font-['Liberation_Mono',monospace] text-[10px]">:4.5m</span></StatusCell>
      <StatusCell className="w-[98px]">底标高<span className="font-['Liberation_Mono',monospace] text-[10px]">:-0.03m</span></StatusCell>
      <StatusCell className="w-[48px] font-['Liberation_Mono',monospace] text-[10px]">1(1)</StatusCell>
      <StatusCell className="w-[911px]">按鼠标左键指定第一个角点，或拾取构件图元</StatusCell>
      <StatusCell className="flex-1 font-['Liberation_Mono',monospace] text-[10px]">628 FPS</StatusCell>
    </div>
  )
}

function TaskStrip() {
  return (
    <div className="h-[6px] bg-black flex shrink-0">
      <div className="w-[48px]" />
      <div className="w-[345px] bg-[#333]" />
      <div className="w-[397px]" />
      <div className="w-[48px] bg-[#333]" />
    </div>
  )
}

// the ime bar floats over the title bar
function ImeBar() {
  return (
    <div className="absolute left-[963px] top-0 h-[27px] flex items-center text-[#1f6fc4]">
      <div className="w-[25px] h-[25px] rounded-[5px] bg-[#ee5a1e] -rotate-12 flex items-center justify-center z-10 text-white font-black text-[20px] leading-[24px] font-['Liberation_Sans',sans-serif]">S</div>
      <div className="w-[183px] h-[23px] mt-[4px] -ml-px bg-white/90 border border-[#b7c7d6] flex items-center pl-[10px] gap-[10px]">
        <span className="text-[14px] font-bold leading-none">中</span>
        <FaMoon className="w-[14px] h-[14px] shrink-0" />
        <span className="text-[12px] font-bold leading-none w-[12px]">°,</span>
        <FaMicrophone className="w-4 h-4 shrink-0" />
        <FaKeyboard className="w-[18px] h-[18px] shrink-0" />
        <FaTshirt className="w-[14px] h-[14px] ml-[26px] shrink-0" />
        <FaWrench className="w-[14px] h-[14px] shrink-0" />
      </div>
      <div className="absolute left-[134px] -top-[29px] w-[46px] h-[46px] rounded-full bg-[#3aa84a] border-2 border-[#2f8a3d] flex items-end justify-center text-white text-[11px] font-bold leading-[15px] font-['Liberation_Sans',sans-serif]">63</div>
    </div>
  )
}

// small floating "Poi..." window at the right of the toolbar
function StartPopup() {
  return (
    <div className="absolute left-[1311px] top-[54px] w-[52px] h-[49px] bg-white flex flex-col">
      <div className="h-[26px] flex items-center pl-[3px] text-[#aaa] shrink-0">
        <span>Poi...</span>
        <span className="ml-auto mr-px w-[19px] h-[20px] bg-[#e2e2e2] text-[#ccc] text-[11px] flex items-center justify-center">×</span>
      </div>
      <div className="flex-1 bg-[#f0f0f0] border border-[#999] border-b-2 border-r-2 border-b-[#666] border-r-[#666] flex items-center justify-center">开始</div>
    </div>
  )
}

export default function App() {
  return (
    <div className="relative w-[1365px] h-[733px] overflow-hidden flex flex-col bg-[#f0f0f0] text-[#222] text-[12px] leading-4 font-['Noto_Sans','Noto_Sans_CJK_SC',sans-serif]">
      <TitleBar />
      <MenuBar />
      <MainToolbar />
      <div className="h-[623px] flex shrink-0">
        <LeftPanel />
        <div className="w-[5px] shrink-0" />
        <div className="w-[1195px] flex flex-col shrink-0 overflow-hidden">
          <EditRow />
          <PropertyRow />
          <DrawRow />
          <Canvas />
          <SnapRow />
        </div>
      </div>
      <StatusBar />
      <TaskStrip />
      <ImeBar />
      <StartPopup />
    </div>
  )
}
